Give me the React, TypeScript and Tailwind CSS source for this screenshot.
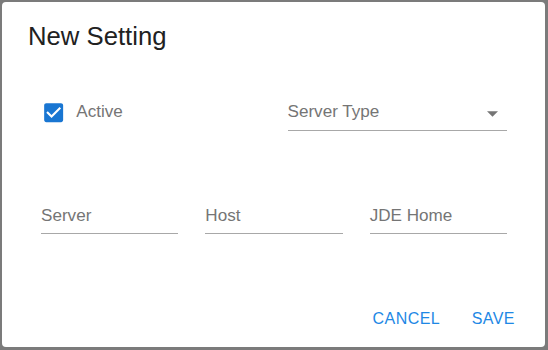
export default function App() {
  return (
    <div className="w-[548px] h-[350px] bg-[#7b7b7b] pl-[2px] pt-[2px] font-['Liberation_Sans',Arial,sans-serif]">
      <div className="w-[543px] h-[345px] bg-white rounded-[4px] flex flex-col">
        <div className="mt-[18px] h-[32px] pl-[26px] text-[25.7px] leading-[32px] text-[#212121]">New Setting</div>
        <div className="pl-[39px] w-[505px]">
          <div className="mt-[50px] grid grid-cols-2 gap-[27px]">
            <div className="flex items-start">
              <svg className="w-[25.3px] h-[25.3px] mt-[-2px] shrink-0" viewBox="0 0 24 24">
                <rect x="5" y="5" width="14" height="14" fill="#fff" />
                <path
                  fill="#1976d2"
                  d="M19 3H5c-1.11 0-2 .9-2 2v14c0 1.1.89 2 2 2h14c1.11 0 2-.9 2-2V5c0-1.1-.89-2-2-2zm-9 14l-5-5 1.41-1.41L10 14.17l7.59-7.59L19 8l-9 9z"
                />
              </svg>
              <span className="ml-[10px] text-[17.1px] leading-[20px] text-[#757575]">Active</span>
            </div>
            <div className="flex flex-col">
              <div className="flex items-start justify-between h-[20px]">
                <span className="text-[17.1px] leading-[20px] text-[#757575]">Server Type</span>
                <svg className="mt-[9px] mr-[9px]" width="11" height="6" viewBox="7 10 10 5">
                  <path d="M7 10l5 5 5-5z" fill="rgba(0,0,0,0.54)" />
                </svg>
              </div>
              <div className="mt-[8px] h-px bg-[#a8a8a8]" />
            </div>
          </div>
          <div className="mt-[75px] grid grid-cols-3 gap-[27px]">
            {["Server", "Host", "JDE Home"].map((l) => (
              <div key={l} className="flex flex-col">
                <span className="h-[20px] text-[17.1px] leading-[20px] text-[#757575]">{l}</span>
                <div className="mt-[7px] h-px bg-[#a8a8a8]" />
              </div>
            ))}
          </div>
        </div>
        <div className="mt-[75px] flex justify-end gap-[31.5px] pr-[30px]">
          <span className="text-[16px] leading-[20px] font-normal tracking-[0.46px] text-[#1e88e5]">CANCEL</span>
          <span className="text-[16px] leading-[20px] font-normal tracking-[0.46px] text-[#1e88e5]">SAVE</span>
        </div>
      </div>
    </div>
  );
}
